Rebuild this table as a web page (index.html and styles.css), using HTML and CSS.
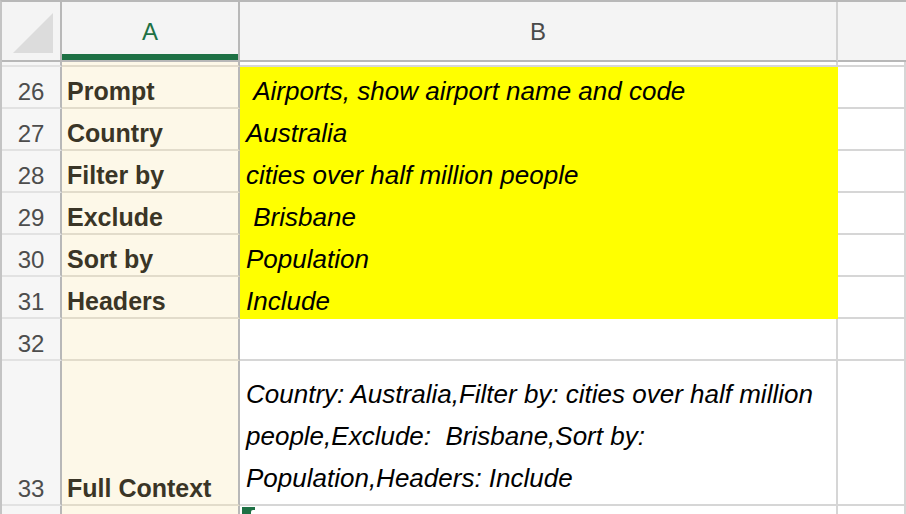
FILE: index.html
```html
<!DOCTYPE html>
<html lang="en">
<head>
    <meta charset="UTF-8">
    <meta name="viewport" content="width=device-width, initial-scale=1.0">
    <title>Sheet - Prompt Context</title>
    <link rel="stylesheet" href="styles.css">
</head>
<body>
    <div class="sheet">
        <!-- column headers -->
        <div class="corner"><span class="corner-tri"></span></div>
        <div class="col-head selected">A</div>
        <div class="col-head">B</div>
        <div class="col-head last"></div>

        <!-- row 25, scrolled mostly out of view -->
        <div class="row-head"></div>
        <div class="cell label"></div>
        <div class="cell"></div>
        <div class="cell"></div>

        <div class="row-head">26</div>
        <div class="cell label">Prompt</div>
        <div class="cell value hl">&nbsp;Airports, show airport name and code</div>
        <div class="cell"></div>

        <div class="row-head">27</div>
        <div class="cell label">Country</div>
        <div class="cell value hl">Australia</div>
        <div class="cell"></div>

        <div class="row-head">28</div>
        <div class="cell label">Filter by</div>
        <div class="cell value hl">cities over half million people</div>
        <div class="cell"></div>

        <div class="row-head">29</div>
        <div class="cell label">Exclude</div>
        <div class="cell value hl">&nbsp;Brisbane</div>
        <div class="cell"></div>

        <div class="row-head">30</div>
        <div class="cell label">Sort by</div>
        <div class="cell value hl">Population</div>
        <div class="cell"></div>

        <div class="row-head">31</div>
        <div class="cell label">Headers</div>
        <div class="cell value hl">Include</div>
        <div class="cell"></div>

        <div class="row-head">32</div>
        <div class="cell label"></div>
        <div class="cell value"></div>
        <div class="cell"></div>

        <div class="row-head">33</div>
        <div class="cell label">Full Context</div>
        <div class="cell value wrap">Country: Australia,Filter by: cities over half million people,Exclude:&nbsp; Brisbane,Sort by: Population,Headers: Include</div>
        <div class="cell"></div>

        <div class="row-head"></div>
        <div class="cell label"></div>
        <div class="cell active"><span class="handle"></span></div>
        <div class="cell"></div>
    </div>
</body>
</html>
```

FILE: styles.css
```css
* {
    box-sizing: border-box;
}
body {
    margin: 0;
    background-color: #ffffff;
    font-family: "Liberation Sans", Arial, sans-serif;
    overflow: hidden;
}
.sheet {
    display: grid;
    grid-template-columns: 60px 178px 598px 1fr;
    grid-template-rows: 60px 5px repeat(7, 42px) 145px 10px;
    width: 906px;
    height: 514px;
    border-top: 2px solid #b8b8b8;
    border-left: 2px solid #c4c4c4;
}
.corner {
    position: relative;
    background-color: #f4f4f4;
    border-right: 2px solid #b8b8b8;
    border-bottom: 2px solid #b8b8b8;
}
.corner-tri {
    position: absolute;
    right: 7px;
    bottom: 7px;
    width: 0;
    height: 0;
    border-left: 40px solid transparent;
    border-bottom: 40px solid #dcdcdc;
}
.col-head {
    display: flex;
    align-items: center;
    justify-content: center;
    padding-top: 2px;
    background-color: #f4f4f4;
    border-right: 2px solid #d2d2d2;
    border-bottom: 2px solid #b8b8b8;
    color: #4a4a4a;
    font-size: 24px;
}
.col-head.selected {
    color: #1e7145;
    border-right-color: #b8b8b8;
    box-shadow: inset 0 -6px 0 #1e7145;
}
.col-head.last {
    border-right: none;
}
.row-head {
    display: flex;
    align-items: flex-end;
    justify-content: center;
    padding-bottom: 1px;
    background-color: #f6f6f6;
    border-right: 2px solid #b8b8b8;
    border-bottom: 2px solid #e2e2e2;
    color: #4d4d4d;
    font-size: 24px;
    line-height: 1.15;
}
.cell {
    display: flex;
    align-items: flex-end;
    border-right: 2px solid #d6d6d6;
    border-bottom: 2px solid #d6d6d6;
    white-space: pre;
}
.label {
    padding: 0 0 1px 5px;
    background-color: #fdf8e8;
    border-right-color: #b8b8b8;
    border-bottom-color: #e2dccb;
    color: #3a3526;
    font-size: 25px;
    font-weight: bold;
    line-height: 1.15;
}
.value {
    padding: 0 0 0 6px;
    color: #000000;
    font-size: 26px;
    font-style: italic;
    line-height: 1.15;
}
.hl {
    background-color: #ffff00;
    border-right-color: #ffff00;
    border-bottom-color: #ffff00;
}
.wrap {
    white-space: pre-wrap;
    padding: 0 6px 5px 6px;
    line-height: 42px;
}
.active {
    position: relative;
}
.handle {
    position: absolute;
    left: 2px;
    top: 1px;
    width: 13px;
    height: 8px;
    background-color: #1e7145;
}
.handle::after {
    content: "";
    position: absolute;
    left: 9px;
    top: 3px;
    width: 5px;
    height: 5px;
    background-color: #ffffff;
    border-radius: 2px 0 0 0;
}
```
